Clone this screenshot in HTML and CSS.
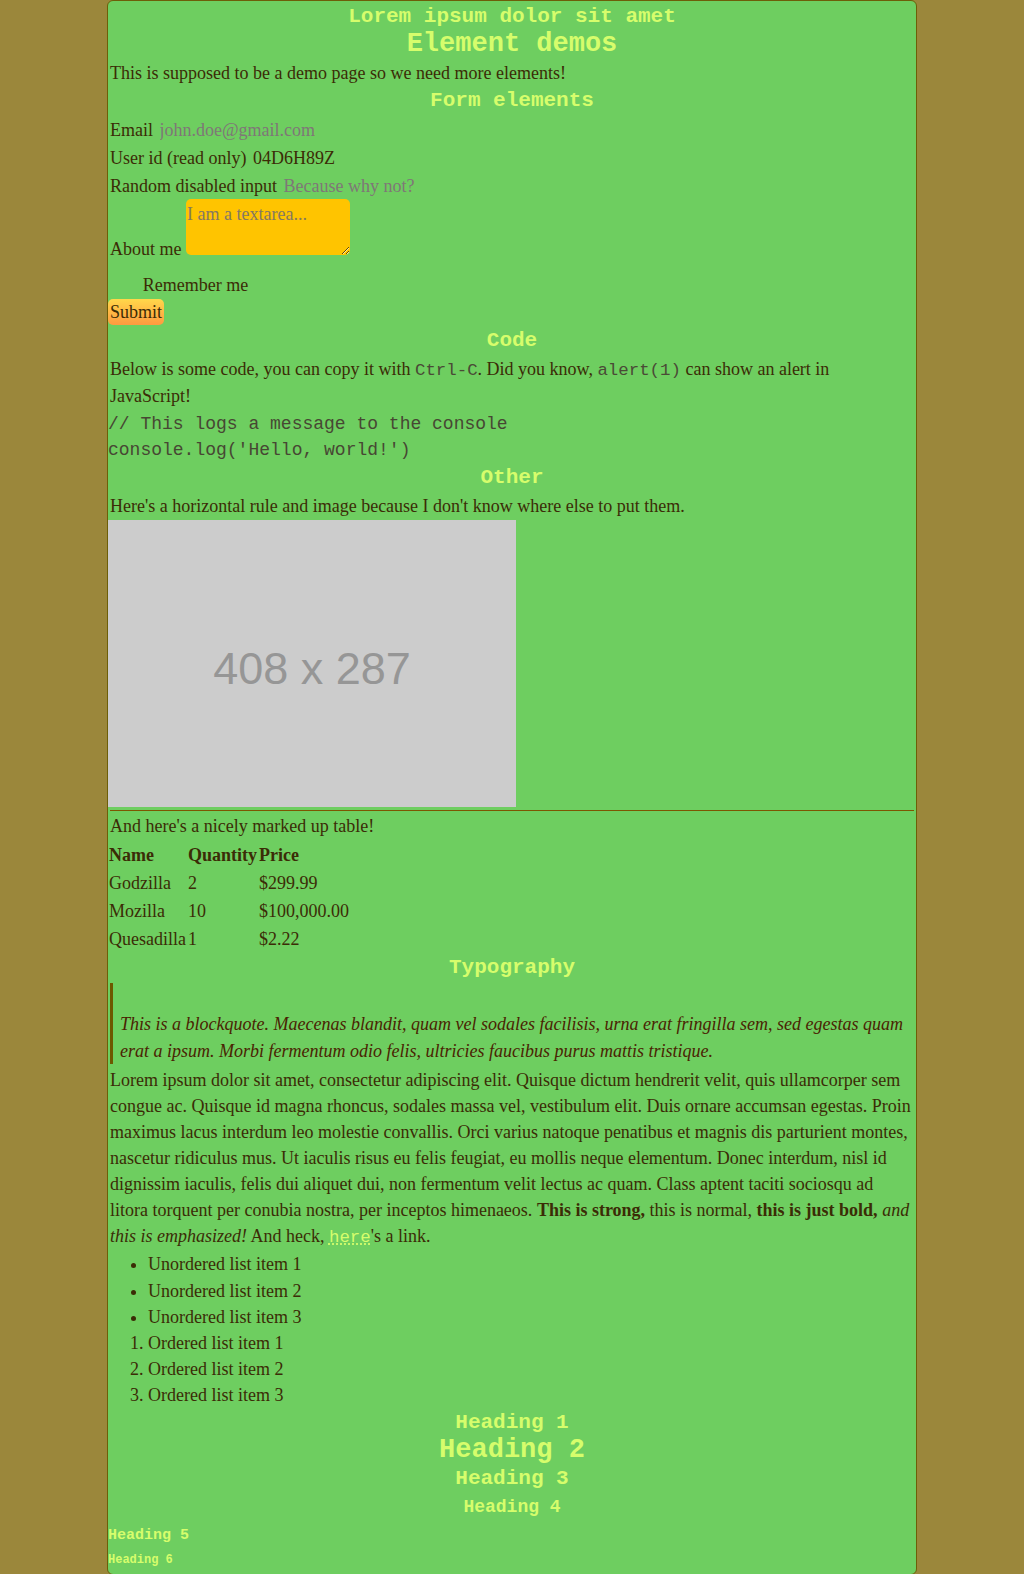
FILE: index.html
```html
<!DOCTYPE html>
<html lang="en">
<head>
<meta charset="utf-8">
<title>Element demos</title>
<link rel="stylesheet" href="styles.css">
</head>
<body>
<div class="page">
  <header>
    <h1 class="site-title">Lorem ipsum dolor sit amet</h1>
    <h2 class="page-title">Element demos</h2>
  </header>
  <p class="intro">This is supposed to be a demo page so we need more elements!</p>

  <h3 class="sec">Form elements</h3>
  <form class="demo-form">
    <div class="field"><label>Email</label><input type="email" placeholder="john.doe@gmail.com"></div>
    <div class="field"><label>User id (read only)</label><input type="text" value="04D6H89Z" readonly></div>
    <div class="field"><label>Random disabled input</label><input type="text" value="Because why not?" disabled></div>
    <div class="field-area"><label>About me</label> <textarea placeholder="I am a textarea..."></textarea></div>
    <div class="field check"><input type="checkbox"><label>Remember me</label></div>
    <button type="button" class="submit">Submit</button>
  </form>

  <h3 class="sec sec-code">Code</h3>
  <p>Below is some code, you can copy it with <code>Ctrl-C</code>. Did you know, <code>alert(1)</code> can show an alert in JavaScript!</p>
  <pre class="code">// This logs a message to the console
console.log('Hello, world!')</pre>

  <h3 class="sec">Other</h3>
  <p>Here's a horizontal rule and image because I don't know where else to put them.</p>
  <div class="placeholder"><span>408 x 287</span></div>
  <hr class="rule">
  <p>And here's a nicely marked up table!</p>
  <table class="demo-table">
    <thead>
      <tr><th>Name</th><th>Quantity</th><th>Price</th></tr>
    </thead>
    <tbody>
      <tr><td>Godzilla</td><td>2</td><td>$299.99</td></tr>
      <tr><td>Mozilla</td><td>10</td><td>$100,000.00</td></tr>
      <tr><td>Quesadilla</td><td>1</td><td>$2.22</td></tr>
    </tbody>
  </table>

  <h3 class="sec">Typography</h3>
  <blockquote class="quote">This is a blockquote. Maecenas blandit, quam vel sodales facilisis, urna erat fringilla sem, sed egestas quam erat a ipsum. Morbi fermentum odio felis, ultricies faucibus purus mattis tristique.</blockquote>
  <p class="lorem">Lorem ipsum dolor sit amet, consectetur adipiscing elit. Quisque dictum hendrerit velit, quis ullamcorper sem congue ac. Quisque id magna rhoncus, sodales massa vel, vestibulum elit. Duis ornare accumsan egestas. Proin maximus lacus interdum leo molestie convallis. Orci varius natoque penatibus et magnis dis parturient montes, nascetur ridiculus mus. Ut iaculis risus eu felis feugiat, eu mollis neque elementum. Donec interdum, nisl id dignissim iaculis, felis dui aliquet dui, non fermentum velit lectus ac quam. Class aptent taciti sociosqu ad litora torquent per conubia nostra, per inceptos himenaeos. <strong>This is strong,</strong> this is normal, <b>this is just bold,</b> <em>and this is emphasized!</em> And heck, <a href="#" class="link">here</a>'s a link.</p>
  <ul class="list">
    <li>Unordered list item 1</li>
    <li>Unordered list item 2</li>
    <li>Unordered list item 3</li>
  </ul>
  <ol class="list olist">
    <li>Ordered list item 1</li>
    <li>Ordered list item 2</li>
    <li>Ordered list item 3</li>
  </ol>

  <h1 class="hd hd1">Heading 1</h1>
  <h2 class="hd hd2">Heading 2</h2>
  <h3 class="hd hd3">Heading 3</h3>
  <h4 class="hd hd4">Heading 4</h4>
  <h5 class="hd hd5">Heading 5</h5>
  <h6 class="hd hd6">Heading 6</h6>
</div>
</body>
</html>
```

FILE: styles.css
```css
html, body {
  background: #9b873b;
}

body {
  margin: 0 8px;
  font-family: "Liberation Serif", "Times New Roman", serif;
  font-size: 18px;
  line-height: 1.45;
  color: #3b2c06;
}

.page {
  width: 808px;
  margin: 0 auto;
  background: #6ece60;
  border: 1px solid #6d5e08;
  border-radius: 6px;
  padding: 1px 0 4.5px;
}

h1, h2, h3, h4, h5, h6 {
  margin: 0;
  font-family: "Liberation Mono", "Courier New", monospace;
  font-weight: bold;
  color: #d6fd6c;
  text-align: center;
}

.site-title {
  font-size: 21px;
  line-height: 1.45;
}

.page-title {
  font-size: 27px;
  line-height: 24px;
}

.sec {
  font-size: 21px;
  line-height: 1.45;
}

.sec-code {
  margin-top: 1px;
}

p {
  margin: 0 2px;
}

.intro {
  margin-top: 3.5px;
}

/* form */
.demo-form {
  margin: 0;
}

.field {
  display: flex;
  align-items: center;
  height: 28px;
}

.field label {
  margin: 0 5.5px 0 2px;
}

.field input {
  font: inherit;
  color: #3b2c06;
  background: transparent;
  border: 0;
  padding: 0 1px;
  margin: 0;
  height: 26px;
  width: 200px;
  outline: none;
}

.field input::placeholder {
  color: #7f7777;
  opacity: 1;
}

.field input:disabled {
  color: #7f7777;
}

.field-area {
  margin: -1px 0 8px;
}

.field-area label {
  margin: 0 0 0 2px;
}

.field-area textarea {
  font: inherit;
  line-height: 1.45;
  width: 164px;
  height: 56px;
  box-sizing: border-box;
  margin: 0;
  padding: 2px 1px;
  border: 0;
  border-radius: 5px;
  background: #ffc400;
  color: #3b2c06;
  vertical-align: baseline;
}

.field-area textarea::placeholder {
  color: #857862;
  opacity: 1;
}

.check input {
  appearance: none;
  -webkit-appearance: none;
  width: 26px;
  height: 13px;
  margin: 0 2px;
  padding: 0;
  border: 0;
  background: transparent;
}

.check label {
  margin: 0 0 0 4.7px;
}

.submit {
  display: block;
  height: 26px;
  margin: 0;
  padding: 0 2px;
  border: 0;
  border-radius: 5px;
  font: inherit;
  line-height: 26px;
  color: #3b2c06;
  background: linear-gradient(to bottom, #ffd84a, #ff9a40);
}

/* code */
code {
  font-family: "Liberation Mono", "Courier New", monospace;
  font-size: 17.4px;
  color: #4a4a36;
}

.code {
  margin: 1.5px 0 0;
  font-family: "Liberation Mono", "Courier New", monospace;
  font-size: 18px;
  line-height: 1.45;
  color: #474733;
}

/* other */
.placeholder {
  width: 408px;
  height: 287px;
  box-sizing: border-box;
  padding-top: 12px;
  background: #cccccc;
  display: flex;
  align-items: center;
  justify-content: center;
  font-family: "Liberation Sans", Arial, sans-serif;
  font-size: 45px;
  line-height: 1.15;
  color: #969696;
}

.rule {
  height: 0;
  border: 0;
  border-top: 1px solid #7d5600;
  margin: 3px 2px 2px;
}

.demo-table {
  border-collapse: collapse;
  margin-top: 2px;
}

.demo-table th,
.demo-table td {
  padding: 1px;
  text-align: left;
  vertical-align: top;
}

.demo-table th {
  font-weight: bold;
}

/* typography */
.quote {
  margin: 0 2px;
  padding: 28px 0 0 7px;
  border-left: 3px solid #6d5800;
  font-style: italic;
  color: #4a2302;
}

.lorem {
  margin-top: 3px;
}

.link {
  font-family: "Liberation Mono", "Courier New", monospace;
  font-size: 17.4px;
  color: #d6fd6c;
  text-decoration: underline dotted;
}

.list {
  margin: 1px 0 0;
  padding-left: 40px;
}

.olist {
  margin-top: 0;
}

.hd1 {
  font-size: 21px;
  line-height: 1.45;
  margin-top: -0.5px;
}

.hd2 {
  font-size: 27px;
  line-height: 24px;
}

.hd3 {
  font-size: 21px;
  line-height: 1.45;
  margin-top: 2.5px;
}

.hd4 {
  font-size: 18px;
  line-height: 1.45;
  margin-top: -1px;
}

.hd5 {
  font-size: 15px;
  line-height: 1.45;
  margin-top: 5.5px;
  text-align: left;
}

.hd6 {
  font-size: 12px;
  line-height: 1.45;
  margin-top: 5px;
  text-align: left;
}
```
